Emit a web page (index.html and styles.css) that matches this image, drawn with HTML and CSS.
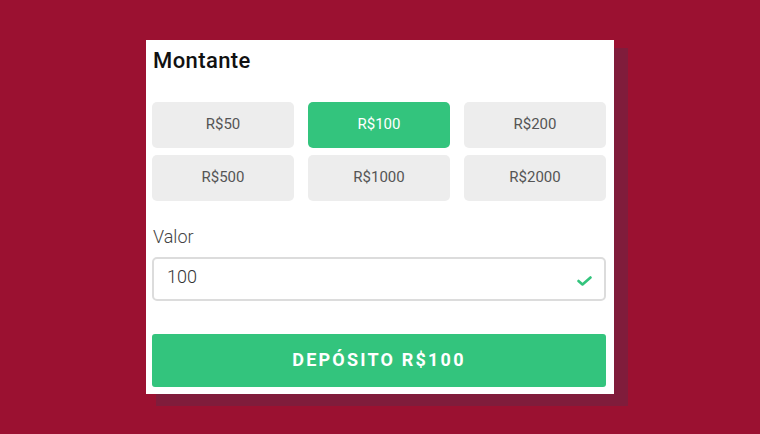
FILE: index.html
```html
<!DOCTYPE html>
<html>
<head>
<meta charset="utf-8">
<link rel="stylesheet" href="styles.css">
</head>
<body>
<div class="stage">
  <div class="card">
    <h2 class="title">Montante</h2>
    <div class="amounts">
      <button class="amt">R$50</button>
      <button class="amt active">R$100</button>
      <button class="amt">R$200</button>
      <button class="amt">R$500</button>
      <button class="amt">R$1000</button>
      <button class="amt">R$2000</button>
    </div>
    <label class="label">Valor</label>
    <div class="field">
      <span class="value">100</span>
      <svg class="check" width="15" height="10" viewBox="0 0 15 10"><path d="M1.5 5 L5.5 8.5 L13.5 1.5" fill="none" stroke="#33c47d" stroke-width="2.6" stroke-linecap="round" stroke-linejoin="round"/></svg>
    </div>
    <button class="deposit">DEPÓSITO R$100</button>
  </div>
</div>
</body>
</html>
```
FILE: styles.css
```css
html, body {
  margin: 0;
  padding: 0;
  background: #9b1131;
  font-family: Roboto, "Liberation Sans", sans-serif;
}
.stage {
  width: 760px;
  height: 434px;
  display: flex;
  justify-content: center;
  padding-top: 40px;
  box-sizing: border-box;
}
.card {
  width: 468px;
  height: 354px;
  background: #fff;
  box-sizing: border-box;
  padding: 0 8px 0 6px;
  box-shadow: 12px 10px 0 2px #801c3b;
  display: flex;
  flex-direction: column;
}
.title {
  margin: 8px 0 0 1px;
  font-size: 22px;
  font-weight: 500;
  letter-spacing: 0.4px;
  color: #111;
  line-height: 26px;
  height: 28px;
}
.amounts {
  margin-top: 26px;
  display: grid;
  grid-template-columns: repeat(3, 142px);
  column-gap: 14px;
  row-gap: 7px;
}
.amt {
  height: 46px;
  border: none;
  border-radius: 5px;
  background: #ededed;
  color: #555;
  font-family: Roboto, "Liberation Sans", sans-serif;
  font-size: 15px;
  font-weight: 400;
  padding: 0 0 3px 0;
}
.amt.active {
  background: #33c47d;
  color: #fff;
}
.label {
  margin-top: 25px;
  margin-left: 1px;
  font-size: 18px;
  font-weight: 300;
  color: #444;
  line-height: 22px;
}
.field {
  margin-top: 9px;
  height: 44px;
  border: 2px solid #dcdcdc;
  border-radius: 5px;
  box-sizing: border-box;
  display: flex;
  align-items: center;
  justify-content: space-between;
  padding: 0 12px 0 13px;
}
.value {
  font-size: 18px;
  font-weight: 300;
  color: #333;
  margin-bottom: 6px;
}
.check {
  margin-top: 4px;
}
.deposit {
  margin-top: 33px;
  height: 53px;
  border: none;
  border-radius: 3px;
  background: #33c47d;
  color: #fff;
  font-family: Roboto, "Liberation Sans", sans-serif;
  font-size: 18px;
  font-weight: 700;
  letter-spacing: 2.2px;
  padding: 0 0 3px 0;
}
```
